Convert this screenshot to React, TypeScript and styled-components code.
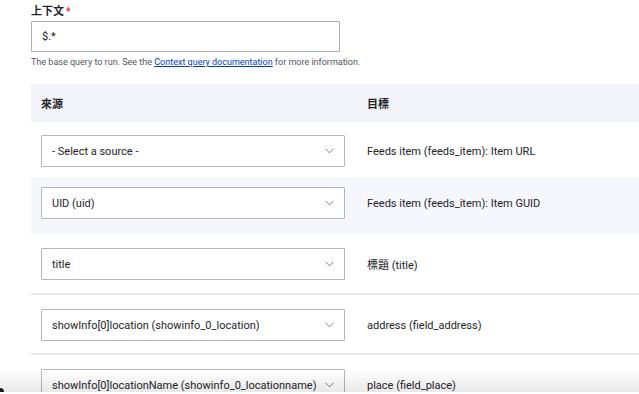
import React from "react";
import styled, { createGlobalStyle } from "styled-components";

const Global = createGlobalStyle`
  html, body { margin: 0; padding: 0; background: #ffffff; overflow: hidden; }
  body { font-family: Roboto, "Noto Sans CJK TC", "Noto Sans", sans-serif; color: #232429; }
`;

const Page = styled.div`
  width: 639px;
  height: 394px;
  position: relative;
  overflow: hidden;
  padding-left: 31px;
  box-sizing: border-box;
`;

const FieldBlock = styled.div`
  display: flex;
  flex-direction: column;
  padding-top: 5px;
`;

const Label = styled.label`
  font-size: 11px;
  line-height: 14px;
  font-weight: 600;
  color: #232429;
  margin-bottom: 2px;
  &::after {
    content: "*";
    color: #dc2323;
    margin-left: 2px;
    font-size: 10px;
    vertical-align: top;
  }
`;

const TextInput = styled.div`
  width: 309px;
  height: 31px;
  box-sizing: border-box;
  border: 1px solid #a9acb2;
  border-radius: 1px;
  padding: 0 10px;
  display: flex;
  align-items: center;
  font-size: 11px;
  color: #232429;
`;

const Help = styled.div`
  margin-top: 5px;
  font-size: 9px;
  line-height: 11px;
  color: #55565e;
  a { color: #003ecc; text-decoration: underline; }
`;

const Table = styled.div`
  margin-top: 16px;
  width: 640px;
`;

const Header = styled.div`
  display: grid;
  grid-template-columns: 326px 1fr;
  height: 38px;
  align-items: center;
  background: #f3f4f9;
  font-size: 11px;
  font-weight: 600;
  color: #232429;
`;

const HeadCell = styled.div`
  padding-left: 10px;
`;

const Row = styled.div<{ $pt: number; $pb: number; $tint?: boolean; $border?: boolean }>`
  display: grid;
  grid-template-columns: 326px 1fr;
  align-items: center;
  padding-top: ${(p) => p.$pt}px;
  padding-bottom: ${(p) => p.$pb}px;
  background: ${(p) => (p.$tint ? "#f5f7fd" : "#ffffff")};
  border-bottom: ${(p) => (p.$border ? "2px solid #ecebe7" : "none")};
`;

const SourceCell = styled.div`
  padding-left: 10px;
`;

const Select = styled.div`
  width: 304px;
  height: 32px;
  box-sizing: border-box;
  border: 1px solid #b4b6bb;
  border-radius: 1px;
  background: #ffffff;
  display: flex;
  align-items: center;
  justify-content: space-between;
  padding: 0 10px 0 10px;
  font-size: 11px;
  color: #232429;
  white-space: nowrap;
`;

const Chevron = styled.svg`
  flex: none;
  width: 9px;
  height: 6px;
`;

const TargetCell = styled.div`
  padding-left: 10px;
  font-size: 11px;
  color: #232429;
  white-space: nowrap;
`;

const BottomShade = styled.div`
  position: absolute;
  left: 0;
  right: 0;
  bottom: 2px;
  height: 22px;
  background: linear-gradient(to bottom, rgba(0,0,0,0), rgba(0,0,0,0.09));
  pointer-events: none;
`;

const BottomEdge = styled.div`
  position: absolute;
  left: 0;
  right: 0;
  bottom: 0;
  height: 2px;
  background: #ffffff;
`;

const Corner = styled.div`
  position: absolute;
  left: 0;
  bottom: 2px;
  width: 4px;
  height: 4px;
  background: #1a1a1a;
  border-top-right-radius: 4px;
`;

const rows = [
  { src: "- Select a source -", tgt: "Feeds item (feeds_item): Item URL", pt: 13, pb: 10 },
  { src: "UID (uid)", tgt: "Feeds item (feeds_item): Item GUID", pt: 10, pb: 15, tint: true },
  { src: "title", tgt: "標題 (title)", pt: 14, pb: 13, border: true },
  { src: "showInfo[0]location (showinfo_0_location)", tgt: "address (field_address)", pt: 14, pb: 12, border: true },
  { src: "showInfo[0]locationName (showinfo_0_locationname)", tgt: "place (field_place)", pt: 14, pb: 12 },
];

export default function App() {
  return (
    <>
      <Global />
      <Page>
        <FieldBlock>
          <Label>上下文</Label>
          <TextInput>$.*</TextInput>
          <Help>
            The base query to run. See the <a href="#">Context query documentation</a> for more information.
          </Help>
        </FieldBlock>
        <Table>
          <Header>
            <HeadCell>來源</HeadCell>
            <HeadCell>目標</HeadCell>
          </Header>
          {rows.map((r, i) => (
            <Row key={i} $pt={r.pt} $pb={r.pb} $tint={r.tint} $border={r.border}>
              <SourceCell>
                <Select>
                  <span>{r.src}</span>
                  <Chevron viewBox="0 0 9 6">
                    <path d="M0.5 0.8 L4.5 4.8 L8.5 0.8" fill="none" stroke="#6b6d75" strokeWidth="0.9" />
                  </Chevron>
                </Select>
              </SourceCell>
              <TargetCell>{r.tgt}</TargetCell>
            </Row>
          ))}
        </Table>
        <BottomShade />
        <BottomEdge />
        <Corner />
      </Page>
    </>
  );
}
